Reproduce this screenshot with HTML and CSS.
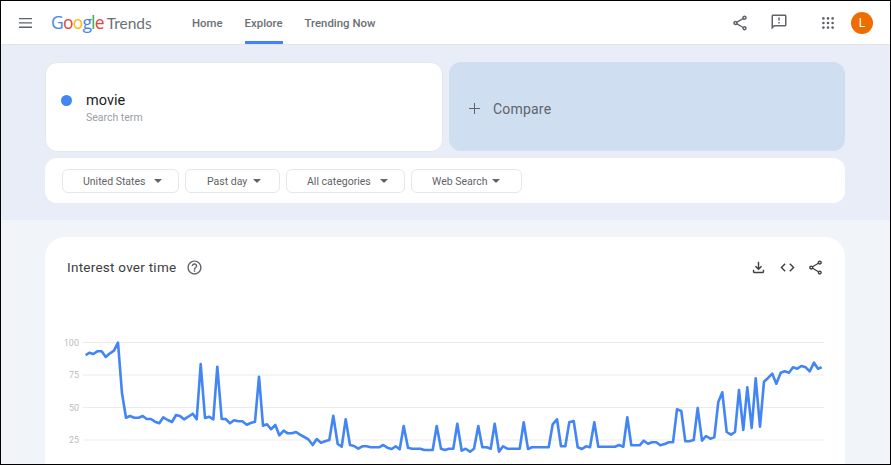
FILE: index.html
```html
<!DOCTYPE html>
<html lang="en">
<head>
    <meta charset="UTF-8">
    <title>Google Trends</title>
    <link rel="stylesheet" href="styles.css">
</head>
<body>
<div class="frame">

    <!-- Barra superior -->
    <header class="topbar">
        <svg class="menu-icon" width="13" height="10" viewBox="0 0 13 10"><path d="M0 0h13v1.300H0zM0 4.300h13v1.300H0zM0 8.600h13v1.300H0z"/></svg>
        <div class="logo">
            <span class="logo-google"><span class="g-blue">G</span><span class="g-red">o</span><span class="g-yellow">o</span><span class="g-blue">g</span><span class="g-green">l</span><span class="g-red">e</span></span>
            <span class="logo-trends">Trends</span>
        </div>
        <nav class="nav">
            <a class="nav-item">Home</a>
            <a class="nav-item active">Explore</a>
            <a class="nav-item">Trending Now</a>
        </nav>
        <div class="top-actions">
            <svg class="icon-share" width="18" height="18" viewBox="0 0 24 24"><path d="M18 16.08c-.76 0-1.44.3-1.96.77L8.91 12.7c.05-.23.09-.46.09-.7s-.04-.47-.09-.7l7.05-4.11c.54.5 1.25.81 2.04.81 1.66 0 3-1.34 3-3s-1.34-3-3-3-3 1.34-3 3c0 .24.04.47.09.7L8.04 9.81C7.5 9.31 6.79 9 6 9c-1.66 0-3 1.34-3 3s1.34 3 3 3c.79 0 1.5-.31 2.04-.81l7.12 4.16c-.05.21-.08.43-.08.65 0 1.61 1.31 2.92 2.92 2.92s2.92-1.31 2.92-2.92-1.31-2.92-2.92-2.92zM18 4c.55 0 1 .45 1 1s-.45 1-1 1-1-.45-1-1 .45-1 1-1zM6 13c-.55 0-1-.45-1-1s.45-1 1-1 1 .45 1 1-.45 1-1 1zm12 7.02c-.55 0-1-.45-1-1s.45-1 1-1 1 .45 1 1-.45 1-1 1z"/></svg>
            <svg class="icon-feedback" width="18" height="18" viewBox="0 0 24 24"><path d="M20 2H4c-1.1 0-2 .9-2 2v18l4-4h14c1.1 0 2-.9 2-2V4c0-1.1-.9-2-2-2zm0 14H5.17L4 17.17V4h16v12zM11 12h2v2h-2zm0-6h2v4h-2z"/></svg>
            <svg class="icon-apps" width="12" height="12" viewBox="0 0 12 12">
                <circle cx="1.4" cy="1.4" r="1.3"/><circle cx="6" cy="1.4" r="1.3"/><circle cx="10.6" cy="1.4" r="1.3"/>
                <circle cx="1.4" cy="6" r="1.3"/><circle cx="6" cy="6" r="1.3"/><circle cx="10.6" cy="6" r="1.3"/>
                <circle cx="1.4" cy="10.6" r="1.3"/><circle cx="6" cy="10.6" r="1.3"/><circle cx="10.6" cy="10.6" r="1.3"/>
            </svg>
            <div class="avatar">L</div>
        </div>
    </header>

    <!-- Banda de busqueda -->
    <section class="explore">
        <div class="terms">
            <div class="term-card">
                <span class="term-dot"></span>
                <div>
                    <div class="term-name">movie</div>
                    <div class="term-type">Search term</div>
                </div>
            </div>
            <div class="compare-card">
                <svg class="plus" width="11" height="11" viewBox="0 0 11 11"><path d="M5 0h1v5h5v1H6v5H5V6H0V5h5z"/></svg>
                <span>Compare</span>
            </div>
        </div>
        <div class="filters">
            <div class="filter f-geo">United States<span class="caret"></span></div>
            <div class="filter f-time">Past day<span class="caret"></span></div>
            <div class="filter f-cat">All categories<span class="caret"></span></div>
            <div class="filter f-prop">Web Search<span class="caret"></span></div>
        </div>
    </section>

    <!-- Grafico -->
    <main class="content">
        <section class="chart-card">
            <div class="chart-head">
                <h2>Interest over time</h2>
                <svg class="icon-help" width="17" height="17" viewBox="0 0 24 24"><path d="M11 18h2v-2h-2v2zm1-16C6.48 2 2 6.48 2 12s4.48 10 10 10 10-4.48 10-10S17.52 2 12 2zm0 18c-4.41 0-8-3.59-8-8s3.59-8 8-8 8 3.59 8 8-3.59 8-8 8zm0-14c-2.21 0-4 1.79-4 4h2c0-1.1.9-2 2-2s2 .9 2 2c0 2-3 1.75-3 5h2c0-2.25 3-2.5 3-5 0-2.21-1.79-4-4-4z"/></svg>
                <div class="chart-actions">
                    <svg width="17" height="17" viewBox="0 0 24 24"><path d="M18 15v3H6v-3H4v3c0 1.1.9 2 2 2h12c1.1 0 2-.9 2-2v-3h-2zm-1-4l-1.41-1.41L13 12.17V4h-2v8.17L8.41 9.59 7 11l5 5 5-5z"/></svg>
                    <svg width="17" height="17" viewBox="0 0 24 24"><path d="M9.4 16.6L4.8 12l4.6-4.6L8 6l-6 6 6 6 1.4-1.4zm5.2 0l4.6-4.6-4.6-4.6L16 6l6 6-6 6-1.4-1.4z"/></svg>
                    <svg width="17" height="17" viewBox="0 0 24 24"><path d="M18 16.08c-.76 0-1.44.3-1.96.77L8.91 12.7c.05-.23.09-.46.09-.7s-.04-.47-.09-.7l7.05-4.11c.54.5 1.25.81 2.04.81 1.66 0 3-1.34 3-3s-1.34-3-3-3-3 1.34-3 3c0 .24.04.47.09.7L8.04 9.81C7.5 9.31 6.79 9 6 9c-1.66 0-3 1.34-3 3s1.34 3 3 3c.79 0 1.5-.31 2.04-.81l7.12 4.16c-.05.21-.08.43-.08.65 0 1.61 1.31 2.92 2.92 2.92s2.92-1.31 2.92-2.92-1.31-2.92-2.92-2.92zM18 4c.55 0 1 .45 1 1s-.45 1-1 1-1-.45-1-1 .45-1 1-1zM6 13c-.55 0-1-.45-1-1s.45-1 1-1 1 .45 1 1-.45 1-1 1zm12 7.02c-.55 0-1-.45-1-1s.45-1 1-1 1 .45 1 1-.45 1-1 1z"/></svg>
                </div>
            </div>
            <svg class="chart" width="800" height="170" viewBox="45 310 800 170">
                <g class="grid">
                    <line x1="83" x2="824" y1="342.5" y2="342.5"/>
                    <line x1="83" x2="824" y1="375" y2="375"/>
                    <line x1="83" x2="824" y1="407.5" y2="407.5"/>
                    <line x1="83" x2="824" y1="440" y2="440"/>
                </g>
                <g class="axis">
                    <text x="79" y="346">100</text>
                    <text x="79" y="378">75</text>
                    <text x="79" y="410.500">50</text>
                    <text x="79" y="443">25</text>
                </g>
                <polyline class="trend" points="85.7,355.3 89.3,352.7 93.3,354 97.3,351.3 101.7,351.3 105.7,357 110,353.3 114,350.7 118,342.7 122,393.3 126,417.7 130,416 134.3,417.7 138.7,417.7 142.7,416 146.7,419 151,419 155,421.7 159.3,423.3 163.3,417.3 167.7,420 172,422 176,415 180,416 184,419.3 188.3,416.7 192.7,413.7 196.7,419.3 200.7,364 205,418 209,416.7 213.3,419.3 217.3,366.7 221.7,419 225.7,419 230,423.3 234,420.3 238.3,421.3 242.3,421.3 246.7,424.7 250.7,423 255,421.7 259,376.7 263,425.7 267,424.3 271,429.3 275.3,425 279.3,435.3 283.7,430.7 287.7,433.3 292,433.3 296,432 300,434.7 304.3,437 308.3,439.3 312.7,445 316.7,439 321,442.7 325,441.3 329.3,440 333.3,415.7 337.7,444 341.7,446.7 345.7,419.3 350,445 354,446 358.3,448.7 362.3,446.3 366.7,446.3 370.7,447.3 379,447.3 383.3,445 387.3,447.7 391.7,449 395.7,446.3 399.7,449.3 403.7,426 408,447.7 412,448.7 420.3,448.7 424.3,450 432.7,450 436.7,426 441,448.7 445,450 449,448.7 453.3,448.7 457.3,423.7 461.7,450.7 465.7,448.7 470,451.7 474,448.7 478.3,426 482.3,447.3 486.7,447.3 490.7,448.7 494.7,423.7 499,451.7 503,446.3 507.3,448.7 519.7,448.7 523.7,422.3 528,449 532,447.3 548.7,447.3 552.7,424.3 557,419.3 561,446.3 565.3,446.3 569.3,422.3 573.7,421 577.700,447.3 582,449 586,446.3 590,447.3 594.300,422.3 598.3,446.7 615,446.7 619,445 623.3,446.7 627.3,417.3 631.3,445.3 639.7,445.3 643.7,440.7 648,443.7 652,442.3 656.3,442.3 660.3,445.3 664.7,444 668.7,442.3 673,442.3 677,409.3 681.3,411 685.3,441.3 689.3,441.3 693.7,440 697.7,408 702,440.7 706,436 710.3,438.7 714.3,437.3 718.3,402 722.3,392.3 726.7,432 731,434.7 735,432 739,390 743.3,430 747.3,387.3 751.7,428 755.7,378.3 760,426.7 764,381.7 768.3,377.7 772.3,373.7 776.3,383.7 780.7,372.7 784.7,371.3 789,372.7 793,367.3 797.3,368.7 801.3,366 805.7,367.3 809.7,371.3 814,362.7 818,368.7 821.7,367.3"/>
            </svg>
        </section>
    </main>

</div>
</body>
</html>
```

FILE: styles.css
```css
* {
    margin: 0;
    padding: 0;
    box-sizing: border-box;
}

html, body {
    height: 100%;
    overflow: hidden;
}

body {
    font-family: Roboto, "Liberation Sans", sans-serif;
    background-color: #fff;
}

.frame {
    height: 465px;
    border: 1px solid #000;
    overflow: hidden;
    display: flex;
    flex-direction: column;
}

/* Barra superior */
.topbar {
    height: 44px;
    flex-shrink: 0;
    background-color: #fff;
    border-bottom: 1px solid #e2e4e8;
    display: flex;
    align-items: center;
    padding-left: 18px;
}

.menu-icon {
    fill: #5f6368;
    margin-right: 19px;
}

.logo {
    display: flex;
    align-items: baseline;
    gap: 3px;
    width: 141px;
    margin-top: -1px;
}

.logo-google {
    font-family: "Open Sans", sans-serif;
    font-size: 17.5px;
    letter-spacing: -0.8px;
}

.logo-trends {
    font-family: Lato, sans-serif;
    font-size: 15.5px;
    color: #6b6f73;
}

.g-blue { color: #4285f4; }
.g-red { color: #ea4335; }
.g-yellow { color: #fbbc05; }
.g-green { color: #34a853; }

.nav {
    display: flex;
    gap: 22px;
    height: 100%;
}

.nav-item {
    font-size: 11.4px;
    font-weight: 500;
    color: #6b6f73;
    height: 100%;
    display: flex;
    align-items: center;
    border-bottom: 3px solid transparent;
    padding-top: 3px;
}

.nav-item.active {
    border-bottom-color: #4285f4;
    border-radius: 2px 2px 0 0;
}

.top-actions {
    margin-left: auto;
    display: flex;
    align-items: center;
    padding-right: 17px;
}

.icon-share { fill: #5f6368; margin-right: 21px; }
.icon-feedback { fill: #5f6368; margin-right: 34px; margin-top: -1px; }
.icon-apps { fill: #5f6368; margin-right: 17px; }

.avatar {
    width: 22px;
    height: 22px;
    border-radius: 50%;
    background-color: #ef6c00;
    color: #fff;
    font-size: 12px;
    display: flex;
    align-items: center;
    justify-content: center;
}

/* Banda de busqueda */
.explore {
    height: 175px;
    flex-shrink: 0;
    background-color: #e8edf7;
    padding: 17px 45px 0 44px;
}

.terms {
    display: grid;
    grid-template-columns: 398px 1fr;
    gap: 6px;
    height: 90px;
}

.term-card {
    background-color: #fff;
    border: 1px solid #e3e7ee;
    border-radius: 12px;
    display: flex;
    align-items: flex-start;
    gap: 14px;
    padding: 29px 0 0 15px;
}

.term-dot {
    width: 11px;
    height: 11px;
    border-radius: 50%;
    background-color: #4285f4;
    margin-top: 3px;
}

.term-name {
    font-size: 14.5px;
    color: #202124;
    line-height: 18px;
}

.term-type {
    font-size: 10.5px;
    color: #9aa0a6;
    line-height: 15px;
}

.compare-card {
    background-color: #d0def2;
    border-radius: 12px;
    height: 89px;
    display: flex;
    align-items: center;
    gap: 13px;
    padding: 4px 0 0 20px;
    font-size: 14px;
    color: #5f6368;
    letter-spacing: 0.2px;
}

.plus {
    fill: #5f6368;
}

.filters {
    margin-top: 6px;
    height: 45px;
    background-color: #fff;
    border-radius: 12px;
    display: flex;
    align-items: center;
    gap: 6px;
    padding-left: 17px;
}

.filter {
    height: 24px;
    border: 1px solid #e5e7ea;
    border-radius: 6px;
    font-size: 10.5px;
    color: #5f6368;
    display: flex;
    align-items: center;
    padding-top: 1px;
}

.f-geo { width: 117px; padding-left: 20px; gap: 8px; }
.f-time { width: 95px; padding-left: 21px; gap: 6px; }
.f-cat { width: 119px; padding-left: 20px; gap: 9px; }
.f-prop { width: 111px; padding-left: 20px; gap: 5px; }

.caret {
    width: 0;
    height: 0;
    border-left: 4px solid transparent;
    border-right: 4px solid transparent;
    border-top: 4px solid #5f6368;
}

/* Grafico */
.content {
    flex: 1;
    background-color: #f1f4f9;
    padding: 17px 45px 0 44px;
}

.chart-card {
    background-color: #fff;
    border-radius: 20px 20px 0 0;
    height: 240px;
}

.chart-head {
    display: flex;
    align-items: center;
    padding: 9px 21px 0 22px;
    height: 52px;
}

.chart-head h2 {
    font-size: 13.5px;
    font-weight: 400;
    color: #3c4043;
    margin: -1px 10px 0 0;
    letter-spacing: 0.25px;
}

.icon-help {
    fill: #5f6368;
}

.chart-actions {
    margin-left: auto;
    display: flex;
    gap: 11.5px;
}

.chart-actions svg {
    fill: #3c4043;
}

.chart {
    display: block;
    margin-top: 21px;
}

.grid line {
    stroke: #ebebeb;
    stroke-width: 1;
}

.axis text {
    font-size: 9px;
    fill: #bdbdbd;
    text-anchor: end;
}

.trend {
    fill: none;
    stroke: #4285f4;
    stroke-width: 2.6;
    stroke-linejoin: round;
}
```
